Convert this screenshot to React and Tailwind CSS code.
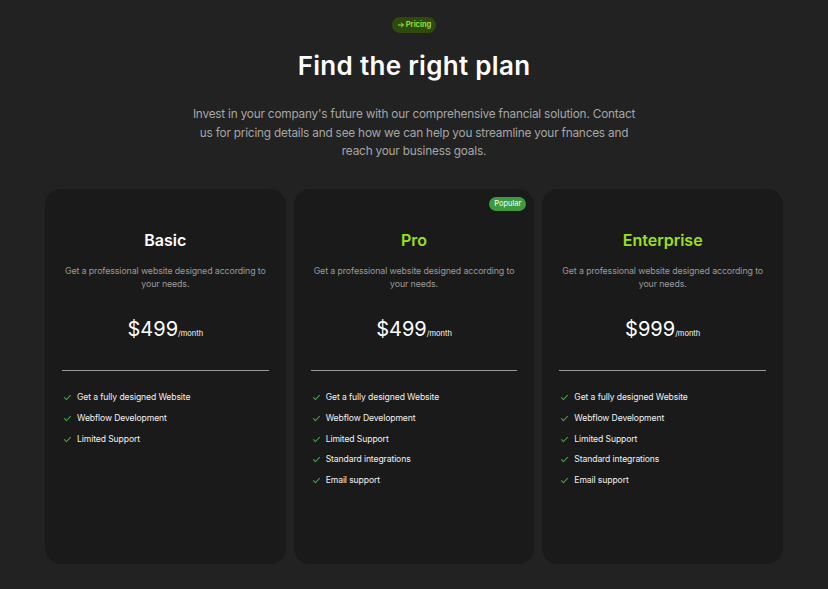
import React from "react";

const plans = [
  {
    name: "Basic",
    price: "$499",
    highlight: false,
    features: ["Get a fully designed Website", "Webflow Development", "Limited Support"],
  },
  {
    name: "Pro",
    price: "$499",
    highlight: true,
    popular: true,
    features: [
      "Get a fully designed Website",
      "Webflow Development",
      "Limited Support",
      "Standard integrations",
      "Email support",
    ],
  },
  {
    name: "Enterprise",
    price: "$999",
    highlight: true,
    features: [
      "Get a fully designed Website",
      "Webflow Development",
      "Limited Support",
      "Standard integrations",
      "Email support",
    ],
  },
];

const Check = () => (
  <svg width="9" height="9" viewBox="0 0 24 24" fill="none" stroke="#43a047" strokeWidth="3" strokeLinecap="round" strokeLinejoin="round">
    <path d="M4 12.5l5 5L20 6.5" />
  </svg>
);

const PlanCard = ({ plan }) => (
  <div className="relative flex-1 h-[375px] bg-[#1a1a1a] rounded-[16px] px-[17px] pt-[40px] flex flex-col">
    {plan.popular && (
      <span className="absolute top-[8px] right-[8px] bg-[#3d9a3f] text-white text-[7.5px] leading-[14px] px-[5px] rounded-full">
        Popular
      </span>
    )}
    <h3
      className={`text-center text-[16px] leading-[22px] font-semibold ${
        plan.highlight ? "text-[#9be01a]" : "text-white"
      }`}
    >
      {plan.name}
    </h3>
    <p className="mt-[13px] text-center text-[8.8px] tracking-[-0.1px] leading-[13px] text-[#9a9a9a]">
      Get a professional website designed according to your needs.
    </p>
    <div className="mt-[25px] text-center text-white leading-[28px]">
      <span className="text-[20px]">{plan.price}</span>
      <span className="text-[7.5px]">/month</span>
    </div>
    <div className="mt-[22px] h-px bg-[#9a9a9a]" />
    <ul className="mt-[17px] flex flex-col pl-[1px]">
      {plan.features.map((f) => (
        <li key={f} className="flex items-center gap-[5px] h-[20.7px] text-[8.6px] tracking-[-0.1px] text-[#f2f2f2]">
          <Check />
          {f}
        </li>
      ))}
    </ul>
  </div>
);

const App = () => {
  return (
    <div
      className="min-h-screen bg-[#222222] flex flex-col items-center pt-[17px] px-[45px]"
      style={{ fontFamily: "Inter, 'Noto Sans', sans-serif" }}
    >
      <span className="flex items-center gap-[1px] bg-[#2f4a0e] text-[#a3e635] text-[7.5px] font-semibold leading-[16px] px-[5px] rounded-full">
        <svg width="8" height="8" viewBox="0 0 24 24" fill="none" stroke="#a3e635" strokeWidth="3" strokeLinecap="round" strokeLinejoin="round">
          <path d="M4 12h15M13 6l6 6-6 6" />
        </svg>
        Pricing
      </span>
      <h1 className="mt-[17px] text-[26px] leading-[32px] font-semibold text-white tracking-[0.3px]">
        Find the right plan
      </h1>
      <p className="mt-[23px] w-[450px] text-center text-[11.8px] tracking-[-0.2px] leading-[18.5px] text-[#a6a6a6]">
        Invest in your company's future with our comprehensive fnancial solution. Contact us for pricing details and see how we can help you streamline your fnances and reach your business goals.
      </p>
      <div className="mt-[28px] w-full flex gap-[8px]">
        {plans.map((p) => (
          <PlanCard key={p.name} plan={p} />
        ))}
      </div>
    </div>
  );
};

export default App;
